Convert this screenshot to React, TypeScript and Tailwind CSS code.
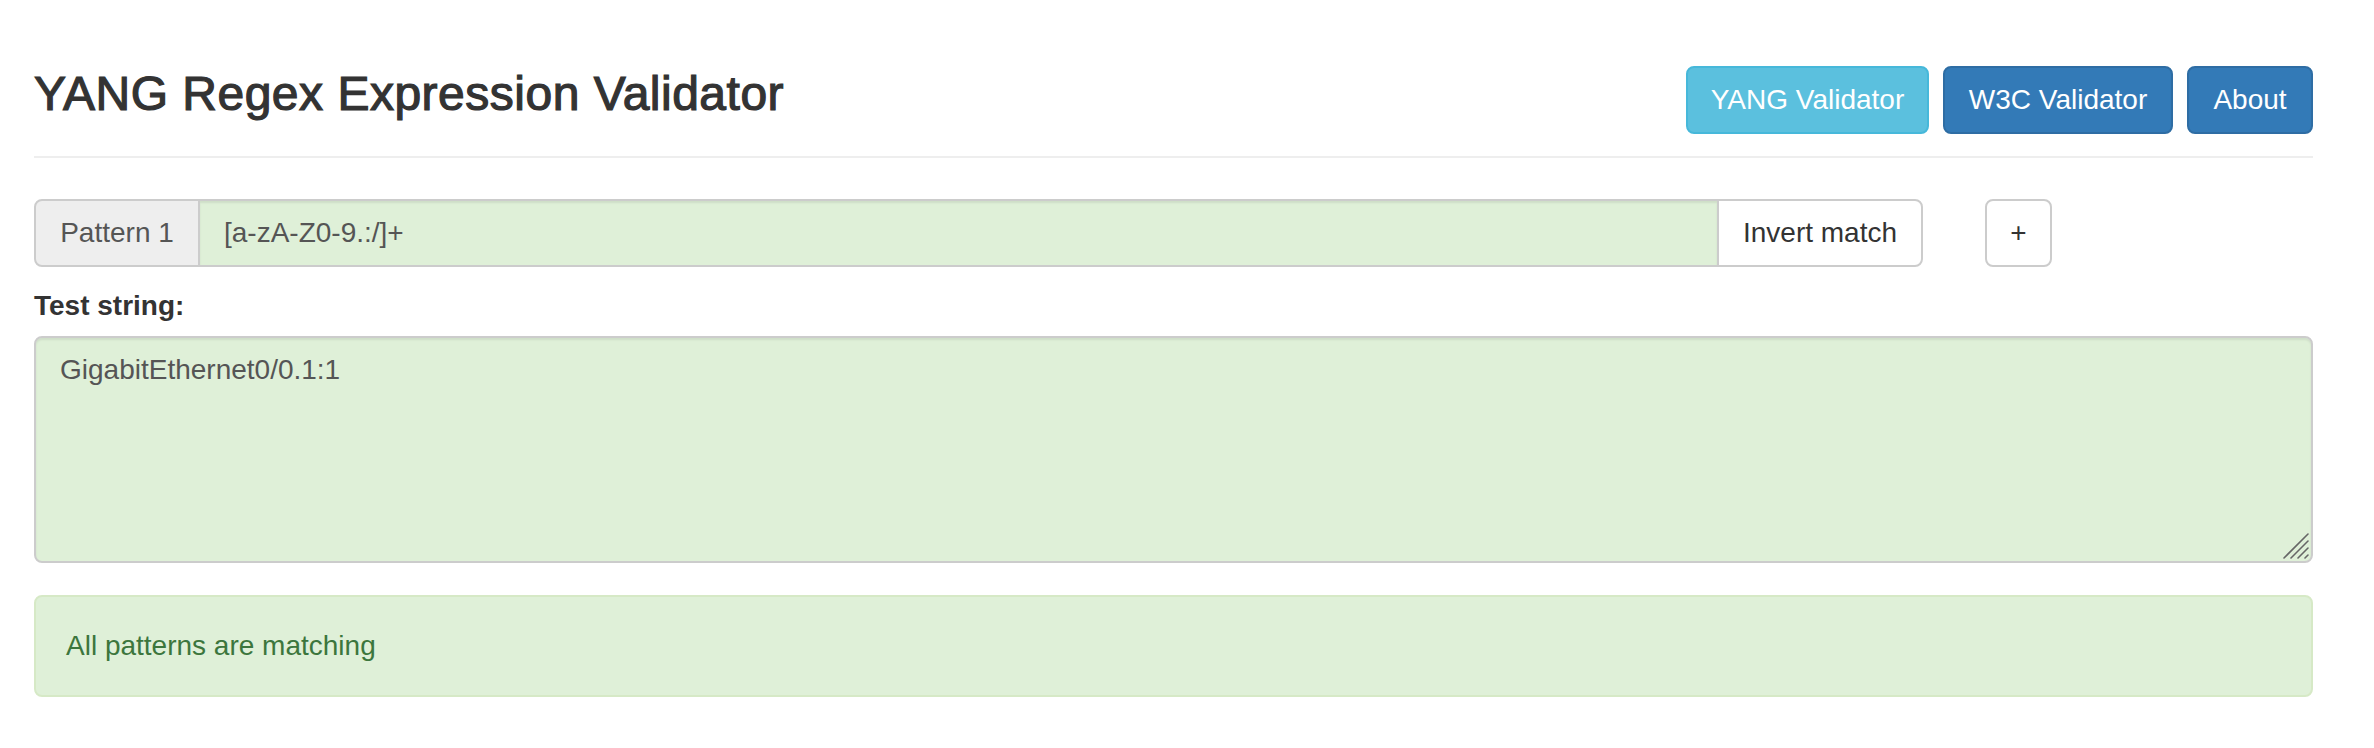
import React from "react";

function ResizeGrip() {
  return (
    <svg
      className="absolute right-[4px] bottom-[4px] pointer-events-none"
      width="26"
      height="26"
      viewBox="0 0 26 26"
    >
      <g stroke="#666" strokeWidth="1.6" strokeLinecap="round">
        <line x1="1" y1="25" x2="25" y2="1" />
        <line x1="8" y1="25" x2="25" y2="8" />
        <line x1="15" y1="25" x2="25" y2="15" />
        <line x1="22" y1="25" x2="25" y2="22" />
      </g>
    </svg>
  );
}

export default function App() {
  return (
    <div className="min-h-[748px] bg-white pl-[34px] pr-[61px] font-['Liberation_Sans',Arial,sans-serif] text-[28px] leading-[40px] text-[#333]">
      <div className="flex items-start justify-between border-b-2 border-[#eee] pt-[66px] pb-[22px]">
        <h3 className="mt-[1px] text-[48px] leading-[53px] font-medium tracking-[0.5px] text-[#333] [-webkit-text-stroke:1.2px_#333]">
          YANG Regex Expression Validator
        </h3>
        <div className="flex gap-[14px]">
          <button className="h-[68px] w-[243px] rounded-[8px] border-2 border-[#46b8da] bg-[#5bc0de] text-center text-[28px] leading-[40px] text-white">
            YANG Validator
          </button>
          <button className="h-[68px] w-[230px] rounded-[8px] border-2 border-[#2e6da4] bg-[#337ab7] text-center text-[28px] leading-[40px] text-white">
            W3C Validator
          </button>
          <button className="h-[68px] w-[126px] rounded-[8px] border-2 border-[#2e6da4] bg-[#337ab7] text-center text-[28px] leading-[40px] text-white">
            About
          </button>
        </div>
      </div>

      <div className="mt-[41px] flex items-start">
        <div className="flex h-[68px] w-[1889px]">
          <span className="flex w-[166px] items-center justify-center rounded-l-[8px] border-2 border-[#ccc] bg-[#eee] text-[#555]">
            Pattern 1
          </span>
          <input
            className="min-w-0 flex-1 border-y-2 border-[#ccc] bg-[#dff0d8] px-[24px] text-[#555] outline-none shadow-[inset_0_2px_2px_rgba(0,0,0,0.075)]"
            defaultValue="[a-zA-Z0-9.:/]+"
          />
          <button className="w-[206px] rounded-r-[8px] border-2 border-[#ccc] bg-white text-center text-[#333]">
            Invert match
          </button>
        </div>
        <button className="ml-[62px] h-[68px] w-[67px] rounded-[8px] border-2 border-[#ccc] bg-white text-center text-[#333]">
          +
        </button>
      </div>

      <label className="mt-[19px] block font-bold leading-[40px]">Test string:</label>
      <div className="relative mt-[10px]">
        <textarea
          className="block h-[227px] w-full resize-none rounded-[8px] border-2 border-[#ccc] bg-[#dff0d8] px-[24px] py-[12px] text-[#555] outline-none shadow-[inset_0_2px_2px_rgba(0,0,0,0.075)]"
          defaultValue="GigabitEthernet0/0.1:1"
        />
        <ResizeGrip />
      </div>

      <div className="mt-[32px] rounded-[8px] border-2 border-[#d6e9c6] bg-[#dff0d8] px-[30px] py-[29px] text-[#3c763d]">
        All patterns are matching
      </div>
    </div>
  );
}
